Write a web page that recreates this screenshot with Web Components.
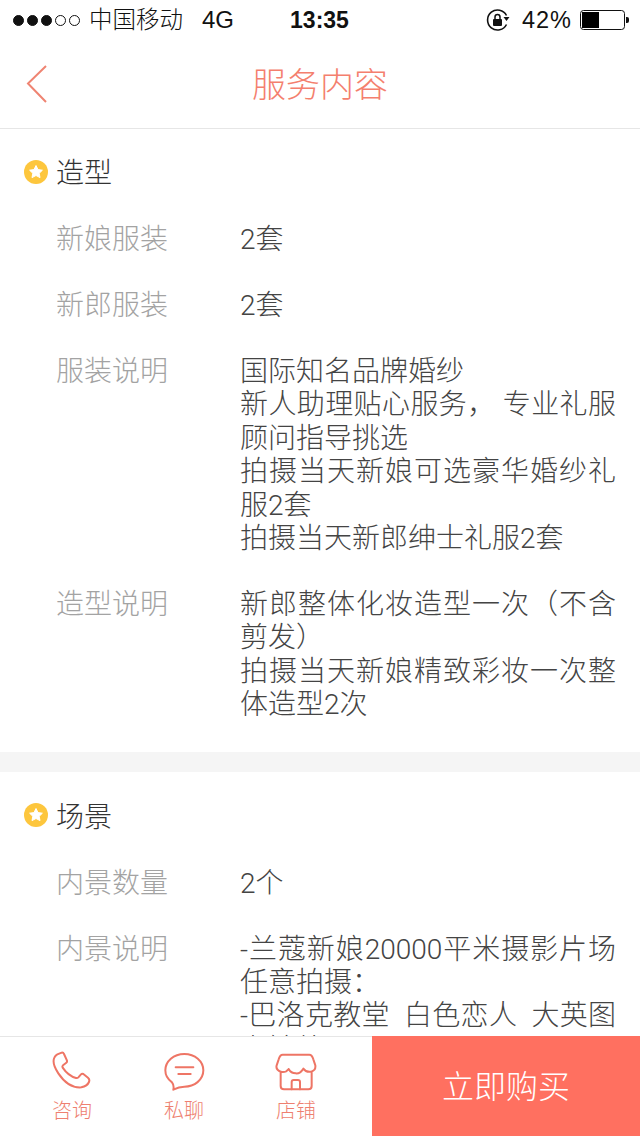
<!DOCTYPE html>
<html lang="zh">
<head>
<meta charset="utf-8">
<title>服务内容</title>
<style>
  html, body { margin: 0; height: 100%; background: #fff; }
  body { font-family: Roboto, "Noto Sans CJK SC", sans-serif; overflow: hidden; }
  app-screen { height: 1136px; }
</style>
</head>
<body>
<app-screen>
  <status-bar slot="top"></status-bar>
  <nav-header slot="top" title="服务内容"></nav-header>

  <service-section title="造型">
    <service-row label="新娘服装">2套</service-row>
    <service-row label="新郎服装">2套</service-row>
    <service-row label="服装说明">国际知名品牌婚纱<br>新人助理贴心服务， 专业礼服顾问指导挑选<br>拍摄当天新娘可选豪华婚纱礼服2套<br>拍摄当天新郎绅士礼服2套</service-row>
    <service-row label="造型说明">新郎整体化妆造型一次（不含剪发）<br>拍摄当天新娘精致彩妆一次整体造型2次</service-row>
  </service-section>
  <service-section title="场景">
    <service-row label="内景数量">2个</service-row>
    <service-row label="内景说明">-兰蔻新娘20000平米摄影片场任意拍摄：<br>-巴洛克教堂&nbsp; 白色恋人&nbsp; 大英图书馆外景</service-row>
  </service-section>

  <bottom-bar slot="bottom" action="立即购买">
    <tab-item label="咨询">
      <svg viewBox="153 93 126 120"><path d="M172 103 L185 98 Q190 97 192 102 L201 122 Q202 126 198 129 L189 136 Q186 139 188 143 Q205 168 228 174 Q232 175 235 172 L243 163 Q246 160 250 162 L264 173 Q270 178 267 186 Q262 198 244 202 Q205 205 175 160 Q155 130 163 113 Q166 106 172 103 Z"/></svg>
    </tab-item>
    <tab-item label="私聊">
      <svg viewBox="489 93 126 120"><path d="M553 102 C585 102 610 124 610 151 C610 180 583 200 553 200 C543 200 535 201 520 209 C522 200 520 192 516 187 C503 178 496 165 496 151 C496 124 521 102 553 102 Z"/><path d="M527 142 H580 M535 162 H572"/></svg>
    </tab-item>
    <tab-item label="店铺">
      <svg viewBox="825 93 126 120"><path d="M848 104 H928 Q936 104 940 118 L946 136 Q948 150 934 155 Q918 158 910 146 Q900 162 887 160 Q873 160 866 147 Q858 158 845 156 Q826 150 830 136 L836 118 Q840 104 848 104 Z"/><path d="M842 158 V198 Q842 208 852 208 H925 Q935 208 935 198 V158"/><path d="M875 208 V186 Q875 180 881 180 H894 Q900 180 900 186 V208"/></svg>
    </tab-item>
  </bottom-bar>
</app-screen>

<script>
class AppScreen extends HTMLElement {
  constructor(){
    super();
    this.attachShadow({mode: 'open'});
    this.shadowRoot.innerHTML = `
      <style>
        :host { display: flex; flex-direction: column; width: 640px; overflow: hidden; }
        main { flex: 1; min-height: 0; overflow: hidden; }
      </style>
      <slot name="top"></slot>
      <main><slot></slot></main>
      <slot name="bottom"></slot>
    `;
  }
}

class StatusBar extends HTMLElement {
  constructor(){
    super();
    this.attachShadow({mode: 'open'});
    this.shadowRoot.innerHTML = `
      <style>
        :host {
          display: grid;
          grid-template-columns: 1fr auto 1fr;
          align-items: center;
          height: 40px;
          padding: 0 11px;
          font: 23.5px "Liberation Sans", "Noto Sans CJK SC", sans-serif;
          color: #111;
        }
        .left, .right { display: flex; align-items: center; }
        .right { justify-content: flex-end; }
        .dots { display: flex; gap: 3px; margin: 0 9px 0 2px; }
        .dots i { width: 11px; height: 11px; box-sizing: border-box; border: 1px solid #111; border-radius: 50%; }
        .dots i.on { background: #111; }
        .carrier { padding-bottom: 4px; font-weight: 300; }
        .net { margin-left: 19px; font-size: 24px; }
        .time { font-weight: bold; font-size: 23px; margin-left: -1px; }
        .pct { margin: 0 8px 0 10px; letter-spacing: 1px; }
        svg { display: block; }
      </style>
      <div class="left">
        <div class="dots"><i class="on"></i><i class="on"></i><i class="on"></i><i></i><i></i></div>
        <span class="carrier">中国移动</span><span class="net">4G</span>
      </div>
      <div class="time">13:35</div>
      <div class="right">
        <svg width="26" height="24" viewBox="0 0 26 24" fill="none" stroke="#111">
          <path d="M20.5 16.5 A10 10 0 1 1 20.5 7.5" stroke-width="1.6"/>
          <path d="M19 9.5 L25 9.5 L22 13.5 Z" fill="#111" stroke="none" transform="translate(-1.5 -0.5)"/>
          <rect x="7" y="11" width="9" height="7" rx="1" fill="#111" stroke="none"/>
          <path d="M9 11 V9 a2.5 2.5 0 0 1 5 0 V11" stroke-width="1.5"/>
        </svg>
        <span class="pct">42%</span>
        <svg width="49" height="20" viewBox="0 0 49 20">
          <rect x="0.5" y="0.5" width="44" height="19" rx="3" fill="none" stroke="#111"/>
          <rect x="2" y="2" width="17" height="16" fill="#000"/>
          <path d="M46 7 h1 a2 2 0 0 1 2 2 v2 a2 2 0 0 1 -2 2 h-1 Z" fill="#111"/>
        </svg>
      </div>
    `;
  }
}

class NavHeader extends HTMLElement {
  constructor(){
    super();
    this.attachShadow({mode: 'open'});
    this.shadowRoot.innerHTML = `
      <style>
        :host {
          display: grid;
          grid-template-columns: 1fr auto 1fr;
          align-items: center;
          height: 88px;
          border-bottom: 1px solid #e6e6e6;
          color: #f47f6e;
          font-size: 34px;
          font-weight: 300;
        }
        .title { padding-bottom: 4px; }
        svg { display: block; margin-left: 26px; }
      </style>
      <svg width="22" height="40" viewBox="0 0 22 40" fill="none" stroke="#ef8472" stroke-width="2"><path d="M20 2 L2 19.5 L20 38"/></svg>
      <div class="title">${this.getAttribute("title")}</div>
    `;
  }
}

class ServiceSection extends HTMLElement {
  constructor(){
    super();
    this.attachShadow({mode: 'open'});
    this.shadowRoot.innerHTML = `
      <style>
        :host {
          display: flex;
          flex-direction: column;
          gap: 32.6px;
          padding: 28px 24px 30.4px 24px;
          margin-bottom: 0.6px;
          border-bottom: 20px solid #f5f5f5;
          font-size: 28px;
          line-height: 33.4px;
        }
        h2 {
          display: flex;
          align-items: center;
          gap: 8px;
          margin: 0;
          font: inherit;
          font-weight: 300;
          color: #333;
        }
        svg { display: block; margin-bottom: 4px; }
      </style>
      <h2>
        <svg width="24" height="24" viewBox="0 0 24 24">
          <circle cx="12" cy="12" r="12" fill="#fdc63d"/>
          <path d="M12 5.5 L14 9.6 L18.4 10.2 L15.2 13.3 L16 17.6 L12 15.5 L8 17.6 L8.8 13.3 L5.6 10.2 L10 9.6 Z" fill="#fff" stroke="#fff" stroke-width="1" stroke-linejoin="round"/>
        </svg>
        <span>${this.getAttribute("title")}</span>
      </h2>
      <slot></slot>
    `;
  }
}

class ServiceRow extends HTMLElement {
  constructor(){
    super();
    this.attachShadow({mode: 'open'});
    this.shadowRoot.innerHTML = `
      <style>
        :host {
          display: grid;
          grid-template-columns: 184px 376px;
          padding-left: 32px;
          font-weight: 300;
        }
        .label { color: #a3a3a3; }
        .value { color: #444; text-align: justify; }
      </style>
      <div class="label">${this.getAttribute("label")}</div>
      <div class="value"><slot></slot></div>
    `;
  }
}

class TabItem extends HTMLElement {
  constructor(){
    super();
    this.attachShadow({mode: 'open'});
    this.shadowRoot.innerHTML = `
      <style>
        :host {
          display: flex;
          flex-direction: column;
          align-items: center;
          width: 112px;
          padding-top: 14px;
          color: #ee7f70;
          font-size: 20px;
          line-height: 24px;
          font-weight: 300;
        }
        ::slotted(svg) {
          display: block;
          width: 42px;
          height: 40px;
          margin-bottom: 8px;
          fill: none;
          stroke: #ee7565;
          stroke-width: 6;
          stroke-linejoin: round;
          stroke-linecap: round;
        }
      </style>
      <slot></slot>
      <div>${this.getAttribute("label")}</div>
    `;
  }
}

class BottomBar extends HTMLElement {
  constructor(){
    super();
    this.attachShadow({mode: 'open'});
    this.shadowRoot.innerHTML = `
      <style>
        :host {
          display: flex;
          height: 100px;
          box-sizing: border-box;
          padding-left: 16px;
          border-top: 1px solid #e6e6e6;
          background: #fff;
        }
        button {
          margin: -1px 0 0 auto;
          width: 268px;
          height: 100px;
          padding: 0 0 5px;
          border: 0;
          background: #ff7060;
          color: #fff;
          font: 300 32px Roboto, "Noto Sans CJK SC", sans-serif;
        }
      </style>
      <slot></slot>
      <button>${this.getAttribute("action")}</button>
    `;
  }
}

customElements.define('app-screen', AppScreen);
customElements.define('status-bar', StatusBar);
customElements.define('nav-header', NavHeader);
customElements.define('service-section', ServiceSection);
customElements.define('service-row', ServiceRow);
customElements.define('tab-item', TabItem);
customElements.define('bottom-bar', BottomBar);
</script>
</body>
</html>
